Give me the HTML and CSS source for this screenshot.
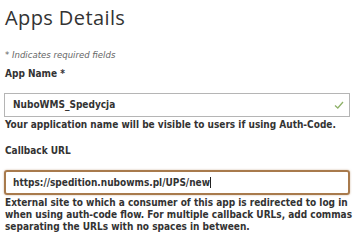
FILE: index.html
```html
<!DOCTYPE html>
<html lang="en">
<head>
    <meta charset="UTF-8">
    <title>Apps Details</title>
    <link rel="stylesheet" href="styles.css">
</head>
<body>
    <div class="page">
        <h1>Apps Details</h1>
        <p class="note">* Indicates required fields</p>

        <div class="field">
            <label class="label" for="app-name">App Name *</label>
            <div class="input-wrap">
                <div class="input" id="app-name">NuboWMS_Spedycja</div>
                <svg class="check" width="10" height="8" viewBox="0 0 10 8">
                    <path d="M1 4.5 L3.8 7 L9 1" fill="none" stroke="#8fb26a" stroke-width="1.3"/>
                </svg>
            </div>
            <p class="help">Your application name will be visible to users if using Auth-Code.</p>
        </div>

        <div class="field">
            <label class="label" for="callback">Callback URL</label>
            <div class="input-wrap">
                <div class="input focused" id="callback">https://spedition.nubowms.pl/UPS/new<span class="caret"></span></div>
            </div>
            <p class="help">External site to which a consumer of this app is redirected to log in when using auth-code flow. For multiple callback URLs, add commas separating the URLs with no spaces in between.</p>
        </div>
    </div>
</body>
</html>
```

FILE: styles.css
```css
body {
    margin: 0;
    background: #fff;
    color: #333;
    font-family: "DejaVu Sans Condensed", "DejaVu Sans", Verdana, sans-serif;
    font-stretch: condensed;
}
.page {
    padding: 0 6px 0 5px;
}
h1 {
    margin: 4px 0 0;
    font-family: "Open Sans", "Noto Sans", sans-serif;
    font-stretch: normal;
    font-weight: 400;
    font-size: 20px;
    letter-spacing: 0.4px;
    line-height: 27px;
    color: #333;
}
.note {
    margin: 18px 0 0;
    font-size: 9.5px;
    font-style: italic;
    color: #666;
    line-height: 12px;
}
.label {
    display: block;
    margin-top: 7px;
    font-size: 10px;
    font-weight: bold;
    line-height: 12px;
}
.input-wrap {
    position: relative;
    margin: 13px 0 0 -1px;
}
.input {
    box-sizing: border-box;
    width: 346px;
    height: 24px;
    padding: 0 8px;
    border: 1px solid #b5b5b5;
    font-size: 10px;
    font-weight: bold;
    color: #333;
    line-height: 22px;
}
.input.focused {
    height: 25px;
    border: 2px solid #a87a4c;
    border-radius: 3px;
    box-shadow: 0 0 2px rgba(168, 122, 76, 0.6);
    line-height: 21px;
    padding: 0 7px;
}
.caret {
    display: inline-block;
    width: 1px;
    height: 11px;
    background: #222;
    vertical-align: -2px;
}
.check {
    position: absolute;
    right: 12px;
    top: 8px;
}
.help {
    margin: 2px 0 0;
    font-size: 10px;
    font-weight: bold;
    line-height: 12px;
}
.field + .field .label {
    margin-top: 14px;
}
```
